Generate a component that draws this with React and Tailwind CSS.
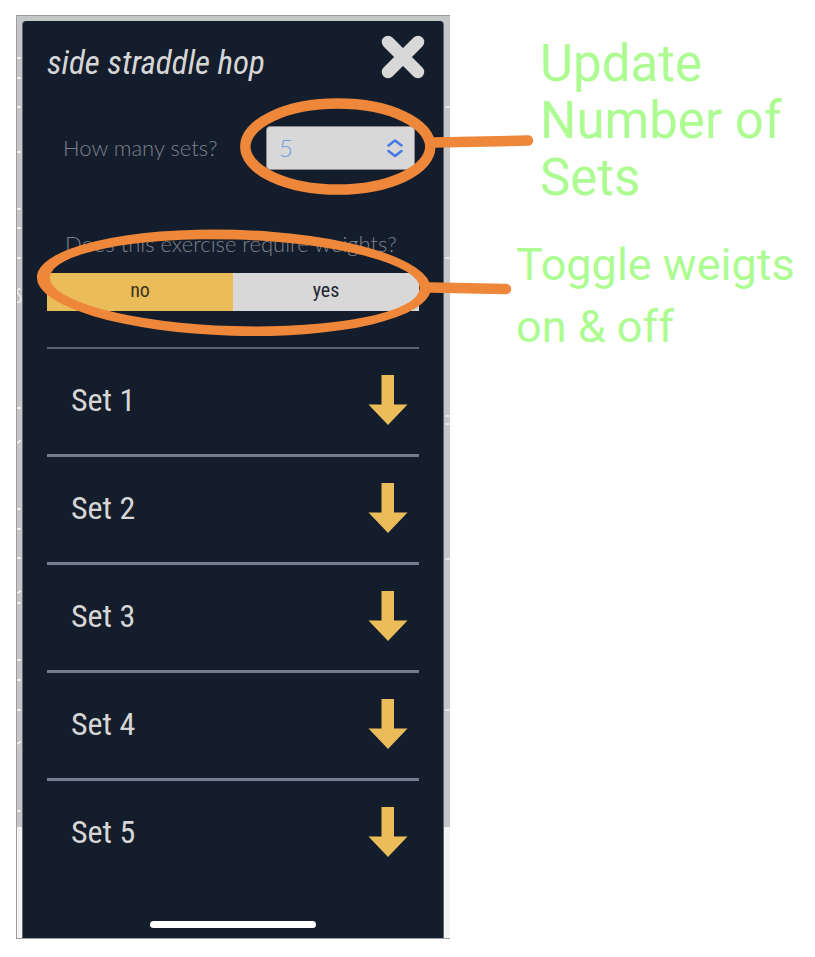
import { useState } from "react";

const SETS = [1, 2, 3, 4, 5];
const NARROW = "font-['Roboto_Condensed',Roboto,sans-serif]";
const LEFT_MARKS = [58, 78, 107, 152, 209, 228, 258, 408, 509, 529, 558, 603, 660, 680, 710, 811];
const RIGHT_MARKS = [107, 258, 416, 424, 559, 710];

function DownArrow() {
  return (
    <svg width="40" height="50" viewBox="0 0 40 50" fill="#ebbd5a" aria-hidden="true">
      <path d="M13.500 0H26V29.500H39.500L20 50L0.500 29.500H13.500Z" />
    </svg>
  );
}

function Backdrop() {
  return (
    <svg className="pointer-events-none absolute inset-0" width="433" height="922" viewBox="17 16 433 922" aria-hidden="true">
      {LEFT_MARKS.map((y) => (
        <rect key={y} x="17" y={y - 1} width="4" height="2" fill="#eeeeee" />
      ))}
      <path
        d="M21 290C18.500 288 17 289.500 17 292C18 295 21.500 295 21 300C20 303 18 302.500 17 302M17 443L21 440.500M17 593L21 591M17 744L21 741.500"
        fill="none"
        stroke="#f2f2f2"
        strokeWidth="1.500"
      />
      {RIGHT_MARKS.map((y) => (
        <rect key={y} x="445" y={y - 1} width="5" height="2" fill="#e6e6e8" />
      ))}
    </svg>
  );
}

function Markup() {
  return (
    <svg className="pointer-events-none absolute left-0 top-0 overflow-visible" width="433" height="922" viewBox="17 16 433 922" fill="none" stroke="#ee8739" strokeWidth="10.500" strokeLinecap="round" aria-hidden="true">
      <ellipse cx="337.800" cy="146.600" rx="92.500" ry="43" />
      <path d="M434 142.500L528 140.500" />
      <path
        transform="translate(233.800 282.800) rotate(1.700)"
        fill="#ee8739"
        stroke="none"
        fillRule="evenodd"
        d="M-197 0A197 53 0 0 1 197 0A197 53 0 0 1 -197 0ZM-184 0A184 43 0 0 0 186 0A184 43 0 0 0 -184 0Z"
      />
      <path d="M430 287.500L506 289" />
    </svg>
  );
}

export default function App() {
  const [sets, setSets] = useState("5");
  const [weights, setWeights] = useState("no");

  return (
    <div className="flex min-h-screen items-start bg-white pl-4 pt-[15px]">
      <div className="relative w-[434px] shrink-0 border-b border-l border-t border-[#9a9c9f] bg-[linear-gradient(#c5c6c8_811px,#f3f3f4_811px)] pl-[5px] pr-1.5 pt-[5px]">
        <Backdrop />
        <main className="relative rounded-t border-x border-[#62666f] bg-[#141d2c] px-6 pb-2.5">
          <header className="flex items-start justify-between pt-3.5">
            <h1 className={`${NARROW} pt-1.5 text-[33px] italic leading-[44px] text-[#d6d6d6]`}>side straddle hop</h1>
            <button type="button" aria-label="Close" className="-mr-1.5">
              <svg width="44" height="44" viewBox="0 0 44 44" stroke="#d8d8d8" strokeWidth="12.500" strokeLinecap="round">
                <path d="M7 7L37 37M37 7L7 37" />
              </svg>
            </button>
          </header>

          <div className="mt-[41px] flex items-center justify-between pl-4 pr-1">
            <label htmlFor="sets" className="font-['Lato',sans-serif] text-[22px] font-light leading-[42px] text-[#7c808a]">
              How many sets?
            </label>
            <div className="relative w-[149px]">
              <select
                id="sets"
                value={sets}
                onChange={(e) => setSets(e.target.value)}
                className="block h-11 w-full appearance-none rounded border border-[#8d8a8f] bg-[#d8d8d8] pl-3 font-['Lato',sans-serif] text-2xl font-light text-[#6f9de0]"
              >
                {SETS.map((n) => (
                  <option key={n}>{n}</option>
                ))}
              </select>
              <svg className="pointer-events-none absolute right-3 top-3" width="16" height="20" viewBox="0 0 16 20" fill="none" stroke="#4478e4" strokeWidth="2.500" strokeLinecap="round" strokeLinejoin="round" aria-hidden="true">
                <path d="M1.500 7.500L8 2.500L14.500 7.500M1.500 13L8 18L14.500 13" />
              </svg>
            </div>
          </div>

          <fieldset className="mt-[60px]">
            <legend className="w-full whitespace-nowrap pl-[18px] font-['Lato',sans-serif] text-[22px] font-light leading-7 text-[#7c808a]">
              Does this exercise require weights?
            </legend>
            <div className="mt-[15px] grid h-[38px] grid-cols-2">
              {["no", "yes"].map((v) => (
                <label
                  key={v}
                  className={`${NARROW} flex cursor-pointer items-center justify-center pb-1 text-xl ${
                    weights === v ? "bg-[#ebbd5a] text-[#3c3420]" : "bg-[#d8d8d8] text-[#23272f]"
                  }`}
                >
                  <input type="radio" name="weights" value={v} checked={weights === v} onChange={() => setWeights(v)} className="sr-only" />
                  {v}
                </label>
              ))}
            </div>
          </fieldset>

          <ul className="mt-9 border-t-2 border-[#5b6376]">
            {SETS.map((n) => (
              <li key={n} className="border-b-3 border-[#747c8f] last:border-b-0">
                <button type="button" className="flex h-[105px] w-full items-center justify-between pb-1 pl-6 pr-[11px]">
                  <span className={`${NARROW} text-[32px] text-[#d6d6d6]`}>Set {n}</span>
                  <DownArrow />
                </button>
              </li>
            ))}
          </ul>

          <div className="mx-auto mt-[35px] h-[7px] w-[166px] rounded-full bg-white" />
        </main>
        <Markup />
      </div>

      <aside className="min-w-0 flex-1 whitespace-nowrap font-['Roboto',sans-serif] text-[#acfc92]">
        <p className="pl-[90px] pt-5 text-[51px] leading-[57px]">
          Update
          <br />
          Number of
          <br />
          Sets
        </p>
        <p className="pl-[66px] pt-7 text-[45px] leading-[62px]">
          Toggle weigts
          <br />
          on &amp; off
        </p>
      </aside>
    </div>
  );
}
